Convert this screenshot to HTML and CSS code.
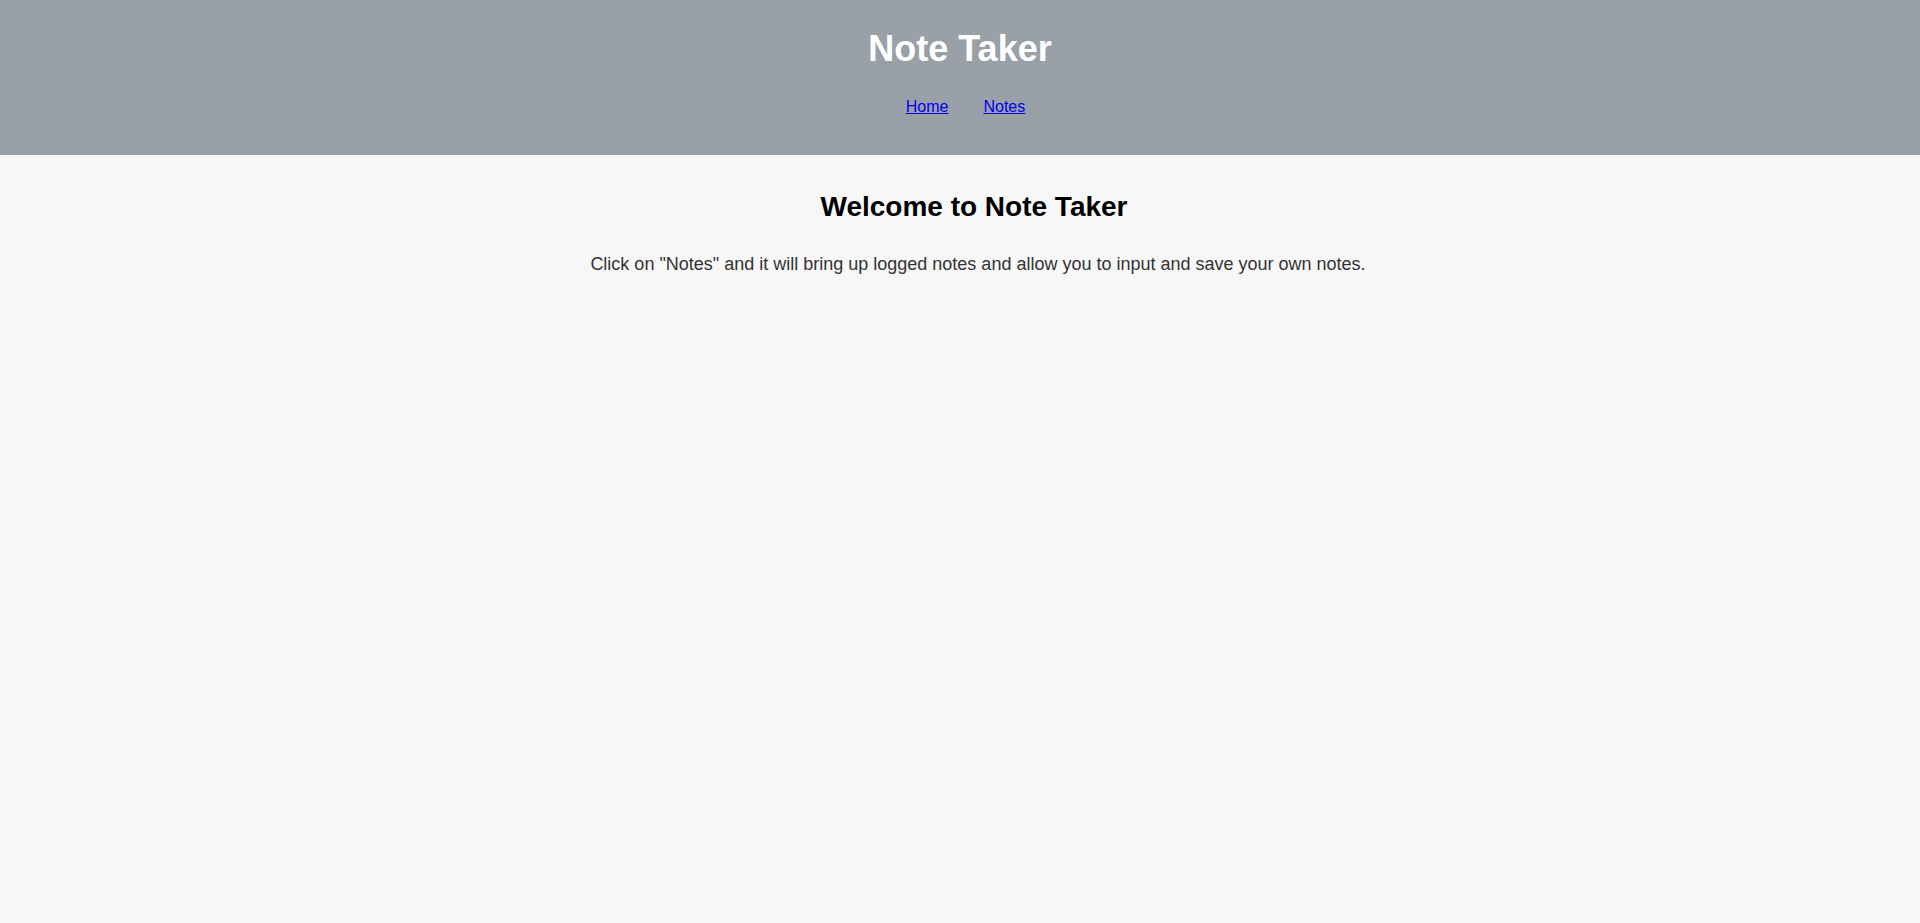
FILE: index.html
```html
<!DOCTYPE html>
<html lang="en">
<head>
<meta charset="utf-8">
<title>Note Taker</title>
<link rel="stylesheet" href="styles.css">
</head>
<body>
<header class="site-header">
  <h1 class="site-title">Note Taker</h1>
  <nav class="site-nav">
    <a href="#" class="nav-link">Home</a>
    <a href="#" class="nav-link">Notes</a>
  </nav>
</header>
<main class="main">
  <h2 class="welcome">Welcome to Note Taker</h2>
  <p class="intro">Click on "Notes" and it will bring up logged notes and allow you to input and save your own notes.</p>
</main>
</body>
</html>
```
FILE: styles.css
```css
html, body {
  margin: 0;
  padding: 0;
}
body {
  background: #f7f7f7;
  font-family: "Liberation Sans", Arial, sans-serif;
  min-height: 923px;
}
.site-header {
  background: #9aa0a8;
  height: 155px;
  box-sizing: border-box;
  padding-top: 28px;
  display: flex;
  flex-direction: column;
  align-items: center;
}
.site-title {
  margin: 0;
  color: #ffffff;
  font-size: 36px;
  font-weight: bold;
  line-height: 41px;
}
.site-nav {
  margin-top: 29px;
  padding-left: 11px;
  display: flex;
  gap: 35px;
  font-size: 16px;
  line-height: 18px;
}
.nav-link {
  color: #0000ee;
  text-decoration: underline;
}
.main {
  padding-left: 28px;
  padding-top: 36px;
  text-align: center;
}
.welcome {
  margin: 0;
  font-size: 28px;
  line-height: 32px;
  font-weight: bold;
  color: #000;
}
.intro {
  margin: 31px 0 0;
  padding-left: 8px;
  font-size: 18px;
  line-height: 21px;
  color: #333;
}
```
